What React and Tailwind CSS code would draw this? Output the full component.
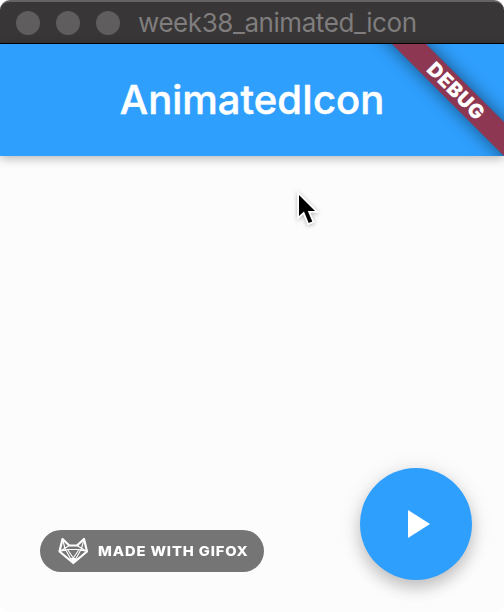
function TitleBar() {
  return (
    <div className="flex h-11 shrink-0 items-center rounded-t-[10px] border-b border-t-2 border-b-black border-t-[#656363] bg-[#383636] pl-4">
      <div className="flex gap-4">
        <span className="size-6 rounded-full bg-[#605d5e]" />
        <span className="size-6 rounded-full bg-[#605d5e]" />
        <span className="size-6 rounded-full bg-[#605d5e]" />
      </div>
      <span className="ml-[18px] mt-px whitespace-nowrap text-[26px] leading-8 tracking-[-0.43px] text-[#7f7d7d]">
        week38_animated_icon
      </span>
    </div>
  );
}

function DebugBanner() {
  return (
    <div className="pointer-events-none absolute inset-0 overflow-hidden">
      <div className="absolute left-[336px] top-[35px] flex h-6 w-60 rotate-45 items-center justify-center bg-[#8d3752] text-[20px] font-black leading-6 tracking-[0.5px] text-white shadow-[0_0_18px_rgba(0,0,0,0.5)]">
        DEBUG
      </div>
    </div>
  );
}

function FoxLogo() {
  return (
    <svg className="h-7 w-8" viewBox="0 0 32 28" fill="none" stroke="white" strokeLinejoin="round" strokeLinecap="round">
      <path strokeWidth="2.2" d="M5.5 2 12.3 8.5H20L27 2 30 14.5 16.3 26 2.5 14.5Z" />
      <path
        strokeWidth="1.1"
        d="M5.5 2 8 11.5 2.5 14.5 12.3 8.5M27 2 24.5 11.5 30 14.5 20 8.5M2.5 14.5 10.5 12.5H22L30 14.5M8 11.5 13.5 21.5M24.5 11.5 19 21.5M10.5 12.5 16.3 21M22 12.5 16.3 21"
      />
      <path fill="white" strokeWidth="1" d="M13.5 21.5H19L16.3 25.5Z" />
    </svg>
  );
}

export default function App() {
  return (
    <div className="relative flex h-[612px] w-[504px] flex-col overflow-hidden bg-white font-['Inter',sans-serif]">
      <TitleBar />
      <header className="relative z-10 flex h-28 shrink-0 items-center justify-center bg-[#2f9ffd] shadow-[0_2px_10px_rgba(0,0,0,0.3)]">
        <h1 className="whitespace-nowrap text-[40px] font-medium leading-[48px] text-white [-webkit-text-stroke:0.5px_white]">
          AnimatedIcon
        </h1>
        <DebugBanner />
      </header>
      <main className="flex flex-1 items-end justify-between rounded-b-[10px] bg-[#fcfcfc] pb-8 pl-10 pr-8">
        <div className="mb-2 flex h-[42px] w-56 items-center rounded-full bg-[#757575] pl-[17px]">
          <FoxLogo />
          <span className="ml-[9px] origin-left scale-x-[1.09] whitespace-nowrap text-[13.5px] font-extrabold leading-4 tracking-[0.8px] text-white">
            MADE WITH GIFOX
          </span>
        </div>
        <button className="flex size-28 items-center justify-center rounded-full bg-[#2f9ffd] shadow-[0_8px_16px_rgba(0,0,0,0.2),0_2px_24px_rgba(0,0,0,0.09)]">
          <svg className="size-12" viewBox="0 0 48 48">
            <path d="M16 10V38L38 24Z" fill="white" />
          </svg>
        </button>
      </main>
      <svg className="absolute left-[290px] top-[186px] h-[44px] w-[34px] drop-shadow-[0_1px_2px_rgba(0,0,0,0.3)]" viewBox="0 0 34 44">
        <path
          d="M9 9V30L14 25.5 18.7 37 22.3 35.5 17.8 25H25Z"
          fill="black"
          stroke="white"
          strokeWidth="3.6"
          strokeLinejoin="miter"
          paintOrder="stroke"
        />
      </svg>
    </div>
  );
}
